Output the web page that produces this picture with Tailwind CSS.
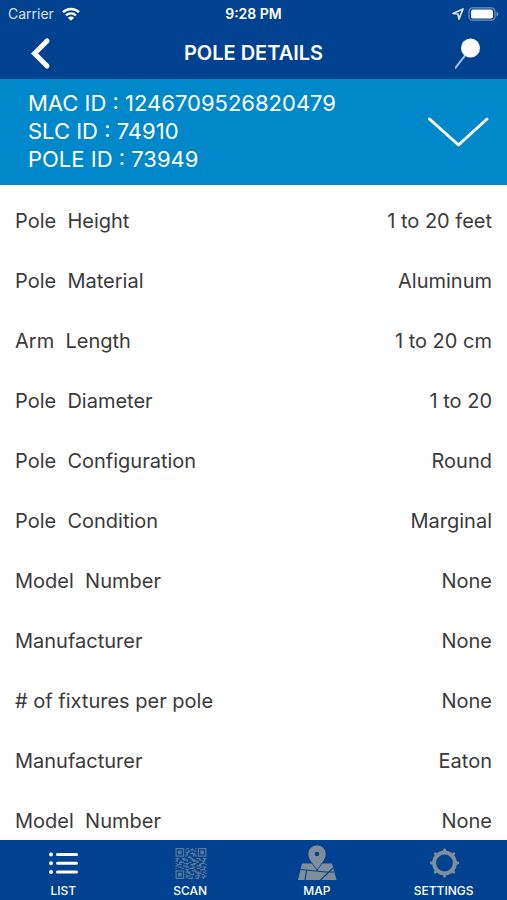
<!DOCTYPE html>
<html lang="en">
<head>
  <meta charset="UTF-8" />
  <meta name="viewport" content="width=device-width, initial-scale=1.0"/>
  <title>Pole Details</title>
  <script src="https://cdn.jsdelivr.net/npm/@tailwindcss/browser@4"></script>
</head>
<body class="h-screen flex flex-col bg-white text-[#3a3a3a] font-['Inter',sans-serif]">
  <header class="bg-[#00428f] text-white">
    <!-- Status bar -->
    <div class="grid grid-cols-3 items-center h-7 px-2 text-sm">
      <div class="flex items-center gap-2 text-[#d5e1f0]">
        <span>Carrier</span>
        <svg class="w-[18px] h-[14px]" viewBox="0 0 18 14" fill="none" stroke="#fff" stroke-width="2.4">
          <path d="M1 5.2a11.5 11.5 0 0 1 16 0M4 8.4a7.2 7.2 0 0 1 10 0"/>
          <path d="M9 13.8 5.9 10.7a4.4 4.4 0 0 1 6.2 0z" fill="#fff" stroke="none"/>
        </svg>
      </div>
      <span class="text-center font-semibold">9:28 PM</span>
      <div class="flex items-center justify-end gap-1">
        <svg class="w-3 h-3" viewBox="0 0 12 12" fill="none" stroke="#dce6f3" stroke-width="1.7" stroke-linejoin="round"><path d="M1 5.5 11 1 7 11 6 6z"/></svg>
        <svg class="w-[31px] h-[14px]" viewBox="0 0 31 14">
          <rect x="1" y=".8" width="26" height="12.4" rx="3.6" fill="none" stroke="#6f96c4" stroke-width="1.2"/>
          <rect x="3" y="2.5" width="22" height="9" rx="2" fill="#fff"/>
          <path d="M28.5 4.5v5q2-1 2-2.5t-2-2.5z" fill="#6f96c4"/>
        </svg>
      </div>
    </div>
    <!-- Title bar -->
    <div class="flex items-center justify-between h-[51px] pb-0.5 px-5">
      <button type="button" aria-label="Back">
        <svg class="w-8 h-9" viewBox="0 0 32 36" fill="none" stroke="#fff" stroke-width="5" stroke-linecap="round"><path d="M27 6 14.5 18.5 27 31"/></svg>
      </button>
      <h1 class="text-xl font-semibold">POLE DETAILS</h1>
      <button type="button" aria-label="Locate pole">
        <svg class="w-8 h-9" viewBox="0 0 32 36"><path d="M12 18 0 33.5" stroke="#a9c2e0" stroke-width="2"/><circle cx="15.5" cy="13" r="9.5" fill="#fff"/></svg>
      </button>
    </div>
  </header>

  <section class="flex items-center justify-between h-[106px] pl-7 pr-4 bg-[#0088cb] text-white">
    <div class="pb-0.5 text-[22px] leading-7">
      <p>MAC ID : 1246709526820479</p>
      <p>SLC ID : 74910</p>
      <p>POLE ID : 73949</p>
    </div>
    <button type="button" aria-label="Show more">
      <svg class="w-16 h-9" viewBox="0 0 64 36" fill="none" stroke="#fff" stroke-width="3" stroke-linecap="round" stroke-linejoin="round"><path d="M2.5 5 31.5 31 60 5"/></svg>
    </button>
  </section>

  <main class="flex-1 min-h-0 overflow-y-auto [scrollbar-width:none] pt-1.5 px-[15px]">
    <dl class="text-xl">
      <div class="flex items-center justify-between h-15"><dt>Pole &nbsp;Height</dt><dd>1 to 20 feet</dd></div>
      <div class="flex items-center justify-between h-15"><dt>Pole &nbsp;Material</dt><dd>Aluminum</dd></div>
      <div class="flex items-center justify-between h-15"><dt>Arm &nbsp;Length</dt><dd>1 to 20 cm</dd></div>
      <div class="flex items-center justify-between h-15"><dt>Pole &nbsp;Diameter</dt><dd>1 to 20</dd></div>
      <div class="flex items-center justify-between h-15"><dt>Pole &nbsp;Configuration</dt><dd>Round</dd></div>
      <div class="flex items-center justify-between h-15"><dt>Pole &nbsp;Condition</dt><dd>Marginal</dd></div>
      <div class="flex items-center justify-between h-15"><dt>Model &nbsp;Number</dt><dd>None</dd></div>
      <div class="flex items-center justify-between h-15"><dt>Manufacturer</dt><dd>None</dd></div>
      <div class="flex items-center justify-between h-15"><dt># of fixtures per pole</dt><dd>None</dd></div>
      <div class="flex items-center justify-between h-15"><dt>Manufacturer</dt><dd>Eaton</dd></div>
      <div class="flex items-center justify-between h-15"><dt>Model &nbsp;Number</dt><dd>None</dd></div>
    </dl>
  </main>

  <nav class="grid grid-cols-4 h-15 pt-[3px] bg-[#00428f] text-white text-xs font-medium">
    <a href="#list" class="flex flex-col items-center">
      <svg class="w-10 h-10" viewBox="0 0 40 40" fill="none" stroke="#fff" stroke-width="3" stroke-linecap="round"><path d="M14.5 11.5h19M14.500 20.3h19M14.5 29h19"/><path d="M8 11.5h0M8 20.3h0M8 29h0" stroke-width="4"/></svg>
      LIST
    </a>
    <a href="#scan" class="flex flex-col items-center">
      <svg class="w-10 h-10" viewBox="0 0 40 40" fill="none" stroke="#597896">
        <g transform="translate(5.5 5) scale(1.24)">
          <path d="M.5.5h6v6h-6zM18.5.5h6v6h-6zM.5 18.5h6v6h-6z"/>
          <path d="M2 3.5h3M20 3.5h3M2 21.5h3" stroke-width="3"/>
          <path d="M9 .5h2m2 0h1m2 0h1M8 1.5h1m3 0h3M10 2.5h2m3 0h2M8 3.5h3m2 0h1M9 4.5h1m2 0h4M8 5.5h2m4 0h3M8 6.5h1m2 0h1m2 0h1m1 0h1M10 7.5h3M0 8.5h3m2 0h3m4 0h2m3 0h3m2 0h3M1 9.5h1m4 0h4m3 0h3m3 0h2m2 0h1M0 10.5h2m2 0h1m4 0h1m4 0h4m3 0h3M3 11.5h4m4 0h2m4 0h2m3 0h1M0 12.5h1m2 0h1m3 0h4m3 0h3m3 0h4M1 13.5h4m4 0h1m2 0h4m3 0h2m3 0h1M0 14.5h2m4 0h3m4 0h1m3 0h4M2 15.5h3m3 0h3m3 0h2m4 0h1m1 0h3M0 16.5h1m4 0h2m4 0h4m2 0h3m3 0h1M8 17.5h3m4 0h1m4 0h4M9 18.5h1m3 0h4m3 0h1m3 0h1M8 19.5h4m4 0h3m3 0h2M10 20.5h2m2 0h1m2 0h4m3 0h1M8 21.5h1m3 0h3m3 0h1m2 0h2M9 22.5h3m4 0h4m3 0h2M8 23.5h2m3 0h1m4 0h1m2 0h3M10 24.5h4m2 0h3m3 0h1"/>
        </g>
      </svg>
      SCAN
    </a>
    <a href="#map" class="flex flex-col items-center">
      <svg class="w-10 h-10" viewBox="0 0 40 40" fill="#808e9b">
        <path d="M5 20.5h30L39.5 37H1z"/>
        <path d="M3.5 26.5 29 29 37 29M9.5 27 8 37.5M23 37.5 36 25" fill="none" stroke="#00428f" stroke-width="1.1"/>
        <path d="M20 27.500C17 22 10.8 17 10.8 11a9.2 9.2 0 0 1 18.4 0C29.2 17 23 22 20 27.500z" stroke="#00428f" stroke-width="1"/>
        <circle cx="20" cy="11" r="2.3" fill="#00428f"/>
      </svg>
      MAP
    </a>
    <a href="#settings" class="flex flex-col items-center">
      <svg class="w-10 h-10" viewBox="0 0 40 40" fill="none" stroke="#808e9b">
        <circle cx="20.5" cy="20" r="10.4" stroke-width="4"/>
        <path d="M20.5 8.500V6.800M20.500 31.500v1.700M9 20H7.300M32 20h1.700M12.400 11.900l-1.200-1.200M28.600 11.900l1.200-1.200M12.400 28.100l-1.200 1.200M28.600 28.100l1.200 1.200" stroke-width="2.8" stroke-linecap="round"/>
      </svg>
      SETTINGS
    </a>
  </nav>
</body>
</html>
